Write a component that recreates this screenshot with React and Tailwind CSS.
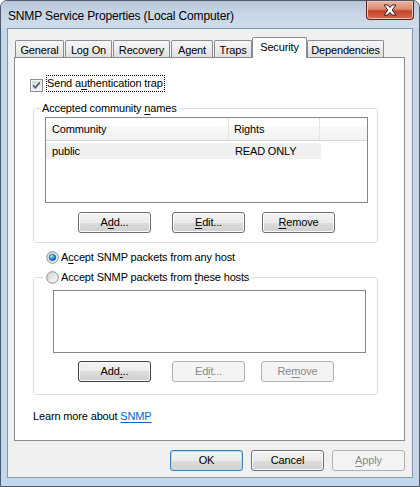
import React from 'react';

const FONT = "font-['Liberation_Sans',Arial,sans-serif]";

const BTN = {
  normal:
    'border-[#707070] text-black bg-[linear-gradient(#f3f3f3_0%,#ebebeb_50%,#dddddd_50%,#cfcfcf_100%)] shadow-[inset_0_0_0_1px_#fcfcfc]',
  primary:
    'border-[#3c7fb1] text-black bg-[linear-gradient(#f3f3f3_0%,#ebebeb_50%,#dddddd_50%,#cfcfcf_100%)] shadow-[inset_0_0_0_1px_#a8e2f8]',
  focus:
    'border-[#3f3f3f] text-black bg-[linear-gradient(#f3f3f3_0%,#ebebeb_50%,#dddddd_50%,#cfcfcf_100%)] shadow-[inset_0_0_0_1px_#fcfcfc]',
  disabled: 'border-[#adb2b5] text-[#8a8a8a] bg-[#f4f4f4]',
};

function Btn({ children, className = '', variant = 'normal' }) {
  return (
    <div
      className={`h-[21px] w-[73px] shrink-0 flex items-center justify-center rounded-[3px] border ${BTN[variant]} ${className}`}
    >
      <span className="leading-[13px]">{children}</span>
    </div>
  );
}

function U({ children }) {
  return <span className="underline underline-offset-[2px]">{children}</span>;
}

function Checkbox() {
  return (
    <svg width="13" height="13" viewBox="0 0 13 13" className="shrink-0">
      <defs>
        <linearGradient id="cbg" x1="0" y1="0" x2="1" y2="1">
          <stop offset="0" stopColor="#d4d6d9" />
          <stop offset="1" stopColor="#f6f6f6" />
        </linearGradient>
      </defs>
      <rect x="0.5" y="0.5" width="12" height="12" fill="#f4f4f4" stroke="#8e8f8f" />
      <rect x="2" y="2" width="9" height="9" fill="url(#cbg)" />
      <path d="M3.2 6.4 L5.4 8.8 L9.8 3.4" fill="none" stroke="#4a5d80" strokeWidth="1.7" />
    </svg>
  );
}

function Radio({ checked }) {
  return (
    <svg width="13" height="13" viewBox="0 0 13 13" className="shrink-0">
      <defs>
        <linearGradient id="rbg" x1="0" y1="0" x2="1" y2="1">
          <stop offset="0" stopColor="#d0d2d5" />
          <stop offset="1" stopColor="#fbfbfb" />
        </linearGradient>
        <radialGradient id="rdot" cx="0.35" cy="0.3" r="0.8">
          <stop offset="0" stopColor="#b8ecff" />
          <stop offset="0.5" stopColor="#2b8de0" />
          <stop offset="1" stopColor="#0c3f8c" />
        </radialGradient>
      </defs>
      <circle cx="6.5" cy="6.5" r="5.8" fill="url(#rbg)" stroke="#8b8e92" strokeWidth="1" />
      {checked && <circle cx="6.5" cy="6.5" r="3.3" fill="url(#rdot)" stroke="#1f4f8c" strokeWidth="0.5" />}
    </svg>
  );
}

const TABS = [
  { label: 'General', cls: 'w-[49px] ml-[1px]' },
  { label: 'Log On', cls: 'w-[47px] ml-[1px]' },
  { label: 'Recovery', cls: 'w-[57px] ml-[1px]' },
  { label: 'Agent', cls: 'w-[42px] ml-[1px]' },
  { label: 'Traps', cls: 'w-[38px] ml-[1px]' },
  { label: 'Security', cls: 'w-[55px]', active: true },
  { label: 'Dependencies', cls: 'w-[77px]' },
];

export default function App() {
  return (
    <div
      className={`${FONT} text-[11px] leading-[13px] tracking-[-0.15px] text-black w-[420px] h-[487px] flex flex-col border border-[#4d5966] rounded-t-[7px] bg-[#c3d6ec] overflow-hidden`}
    >
      {/* title bar */}
      <div className="h-[27px] shrink-0 flex items-start justify-between bg-[linear-gradient(#b6c6d8_0%,#c7d5e5_45%,#cfdcec_100%)]">
        <div className="pl-[7px] pt-[8px] text-[12px] leading-[14px]">SNMP Service Properties (Local Computer)</div>
        <div className="mr-[5px] w-[48px] h-[19px] rounded-b-[4px] border border-t-0 border-[#5e2018] bg-[linear-gradient(#eeb3a3_0%,#de8c76_45%,#c6452c_55%,#d5674d_100%)] shadow-[inset_0_0_0_1px_#f3c1b2] flex items-center justify-center">
          <svg width="14" height="12" viewBox="0 0 14 12">
            <path
              d="M1 1 H5 L7 3.6 L9 1 H13 L9.2 6 L13 11 H9 L7 8.4 L5 11 H1 L4.8 6 Z"
              fill="#ffffff"
              stroke="#3b1d1a"
              strokeWidth="1"
              strokeLinejoin="round"
            />
          </svg>
        </div>
      </div>

      {/* client area */}
      <div className="mx-[6px] h-[450px] shrink-0 border border-[#8496ab] bg-[#f0f0f0] pt-[8px] pl-[6px] pr-[7px] flex flex-col">
        {/* tabs */}
        <div className="h-[20px] flex items-end">
          {TABS.map((t) =>
            t.active ? (
              <div
                key={t.label}
                className={`${t.cls} h-[21px] -mb-[1px] relative z-10 bg-white border border-b-0 border-[#898c95] rounded-t-[2px] flex items-start justify-center pt-[3px]`}
              >
                {t.label}
              </div>
            ) : (
              <div
                key={t.label}
                className={`${t.cls} h-[17px] border border-b-0 border-[#898c95] rounded-t-[2px] bg-[linear-gradient(#f7f7f7_0%,#ececec_50%,#e0e0e0_100%)] flex items-center justify-center pt-[2px]`}
              >
                {t.label}
              </div>
            )
          )}
        </div>

        {/* panel */}
        <div className="h-[384px] w-[391px] border border-[#898c95] bg-white flex flex-col">
          {/* send auth trap */}
          <div className="mt-[17px] ml-[15px] h-[17px] flex items-start">
            <div className="mt-[4px]">
              <Checkbox />
            </div>
            <div className="ml-[3px] h-[17px] border border-dotted border-black flex items-center pr-[1px]">
              Send a<U>u</U>thentication trap
            </div>
          </div>

          {/* accepted community names */}
          <fieldset className="mt-[10px] ml-[18px] w-[345px] border border-[#d5dfe5] rounded-[3px] pb-[9px]">
            <legend className="ml-[6px] px-[2px] leading-[13px]">
              Accepted community <U>n</U>ames
            </legend>
            <div className="mt-[2px] ml-[11px] w-[323px] h-[86px] border border-[#828790] bg-white">
              <div className="h-[23px] flex border-b border-[#d5d5d5] bg-[linear-gradient(#ffffff_0%,#ffffff_40%,#f6f7f8_40%,#f1f2f4_100%)]">
                <div className="w-[183px] border-r border-[#e3e4e6] flex items-center pl-[6px] pt-[1px]">Community</div>
                <div className="w-[91px] border-r border-[#e3e4e6] flex items-center pl-[5px] pt-[1px]">Rights</div>
                <div className="flex-1" />
              </div>
              <div className="mt-[2px] w-[275px] h-[16px] bg-[#f0f0f0] flex items-center">
                <div className="w-[183px] pl-[6px]">public</div>
                <div className="pl-[6px]">READ ONLY</div>
              </div>
            </div>
            <div className="mt-[9px] ml-[44px] flex">
              <Btn>
                A<U>d</U>d...
              </Btn>
              <Btn className="ml-[21px]">
                <U>E</U>dit...
              </Btn>
              <Btn className="ml-[17px]">
                <U>R</U>emove
              </Btn>
            </div>
          </fieldset>

          {/* any host */}
          <div className="mt-[7px] ml-[31px] h-[14px] flex items-center">
            <Radio checked />
            <span className="ml-[2px]">
              A<U>c</U>cept SNMP packets from any host
            </span>
          </div>

          {/* these hosts */}
          <fieldset className="mt-[6px] ml-[18px] w-[345px] border border-[#d5dfe5] rounded-[3px] pb-[12px]">
            <legend className="ml-[9px] px-[3px] h-[14px] flex items-center">
              <Radio />
              <span className="ml-[2px]">
                Accept SNMP packets from <U>t</U>hese hosts
              </span>
            </legend>
            <div className="mt-[6px] ml-[19px] w-[313px] h-[63px] border border-[#828790] bg-white" />
            <div className="mt-[8px] ml-[44px] flex">
              <Btn variant="focus">
                Add<U>.</U>..
              </Btn>
              <Btn variant="disabled" className="ml-[21px]">
                Ed<U>i</U>t...
              </Btn>
              <Btn variant="disabled" className="ml-[16px]">
                Re<U>m</U>ove
              </Btn>
            </div>
          </fieldset>

          <div className="mt-[15px] ml-[18px]">
            Learn more about <span className="text-[#0066cc] underline underline-offset-[2px]">SNMP</span>
          </div>
        </div>

        {/* dialog buttons */}
        <div className="mt-[9px] flex justify-end gap-[8px]">
          <Btn variant="primary">OK</Btn>
          <Btn>Cancel</Btn>
          <Btn variant="disabled">
            <U>A</U>pply
          </Btn>
        </div>
      </div>
    </div>
  );
}
